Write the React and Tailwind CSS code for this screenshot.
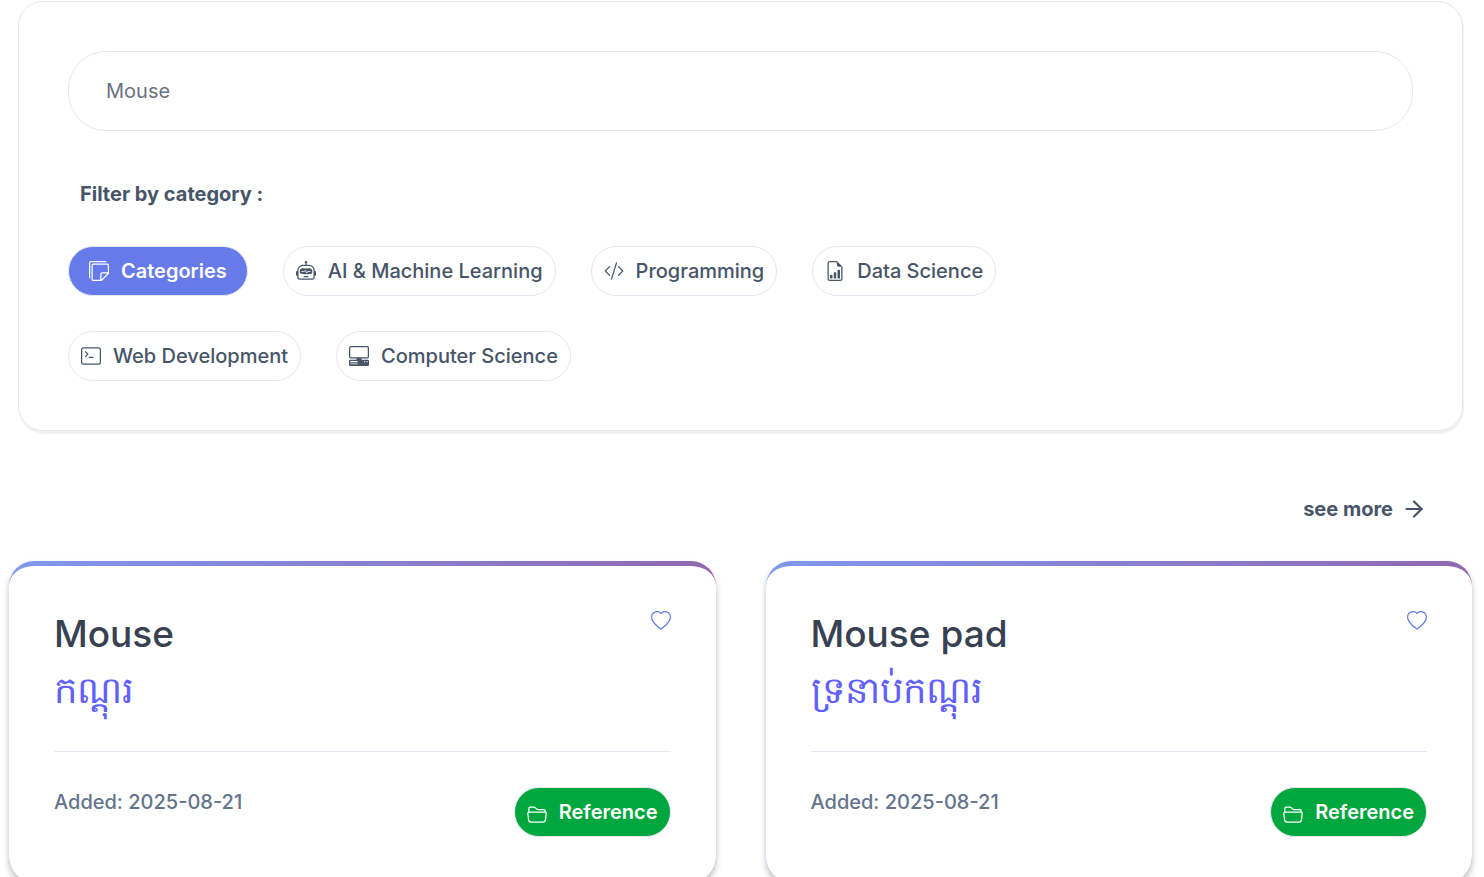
import { useState } from "react";
import {
  BsStickies,
  BsRobot,
  BsCodeSlash,
  BsFileEarmarkBarGraph,
  BsTerminal,
  BsPcDisplayHorizontal,
  BsHeart,
  BsFolder2Open,
} from "react-icons/bs";
import { ArrowRight } from "lucide-react";

const categories = [
  { label: "Categories", Icon: BsStickies },
  { label: "AI & Machine Learning", Icon: BsRobot },
  { label: "Programming", Icon: BsCodeSlash },
  { label: "Data Science", Icon: BsFileEarmarkBarGraph },
  { label: "Web Development", Icon: BsTerminal },
  { label: "Computer Science", Icon: BsPcDisplayHorizontal },
];

const words = [
  { term: "Mouse", khmer: "កណ្ដុរ", added: "2025-08-21" },
  { term: "Mouse pad", khmer: "ទ្រនាប់កណ្ដុរ", added: "2025-08-21" },
];

function CategoryButton({ label, Icon, active, onClick }) {
  return (
    <button
      type="button"
      aria-pressed={active}
      onClick={onClick}
      className={
        "flex h-[50px] items-center gap-3 rounded-full border border-slate-200 " +
        (active ? "bg-[#667aea] px-5 font-semibold text-white" : "bg-white px-3 font-medium text-[#475569]")
      }
    >
      <Icon className="size-5" aria-hidden="true" />
      {label}
    </button>
  );
}

function WordCard({ term, khmer, added }) {
  return (
    <article className="rounded-[25px] border-t-5 border-transparent px-[45px] pt-[45px] pb-[45px] shadow-[0_4px_6px_rgba(0,0,0,0.25)] [background:linear-gradient(#fff,#fff)_padding-box,linear-gradient(90deg,#8098f0,#9168b0)_border-box]">
      <div className="flex items-start justify-between">
        <div>
          <h2 className="text-[37px] leading-[46px] font-medium text-[#374151]">{term}</h2>
          <p lang="km" className="mt-2 text-[37px] leading-[50px] font-light text-[#615fff]">
            {khmer}
          </p>
        </div>
        <button type="button" aria-label={"Save " + term} className="text-[#667eea]">
          <BsHeart className="size-5" />
        </button>
      </div>
      <div className="mt-9 flex items-start justify-between border-t border-slate-200 pt-[35px]">
        <p className="font-medium text-[#64748b]">Added: {added}</p>
        <a
          href="#reference"
          className="flex h-[50px] items-center gap-3 rounded-full border border-slate-200 bg-[#00a63e] px-3 font-semibold text-white"
        >
          <BsFolder2Open className="mt-1 size-5" aria-hidden="true" />
          Reference
        </a>
      </div>
    </article>
  );
}

export default function App() {
  const [query, setQuery] = useState("Mouse");
  const [selected, setSelected] = useState("Categories");

  return (
    <main className="h-screen overflow-hidden bg-white pt-px pr-3 pl-[9px] font-['Inter','Noto_Sans',sans-serif] text-[20px] leading-[30px] text-[#475569]">
      <section className="mx-[9px] rounded-[25px] border border-slate-200 p-[49px] shadow-[1px_3px_1px_rgba(0,0,0,0.06)]">
        <input
          type="search"
          aria-label="Search words"
          value={query}
          onChange={(e) => setQuery(e.target.value)}
          className="h-20 w-full appearance-none rounded-[38px] border border-slate-200 px-[37px] text-gray-500 outline-none"
        />
        <h3 className="mt-12 px-3 font-bold">Filter by category :</h3>
        <div className="mt-[37px] flex max-w-[1000px] flex-wrap gap-[35px]">
          {categories.map(({ label, Icon }) => (
            <CategoryButton
              key={label}
              label={label}
              Icon={Icon}
              active={label === selected}
              onClick={() => setSelected(label)}
            />
          ))}
        </div>
      </section>

      <div className="mt-[63px] flex justify-end pr-[45px]">
        <a href="#more" className="flex items-center gap-2 font-bold">
          see more
          <ArrowRight className="size-[26px]" aria-hidden="true" />
        </a>
      </div>

      <div className="mt-[37px] grid grid-cols-2 gap-[50px]">
        {words.map((word) => (
          <WordCard key={word.term} {...word} />
        ))}
      </div>
    </main>
  );
}
